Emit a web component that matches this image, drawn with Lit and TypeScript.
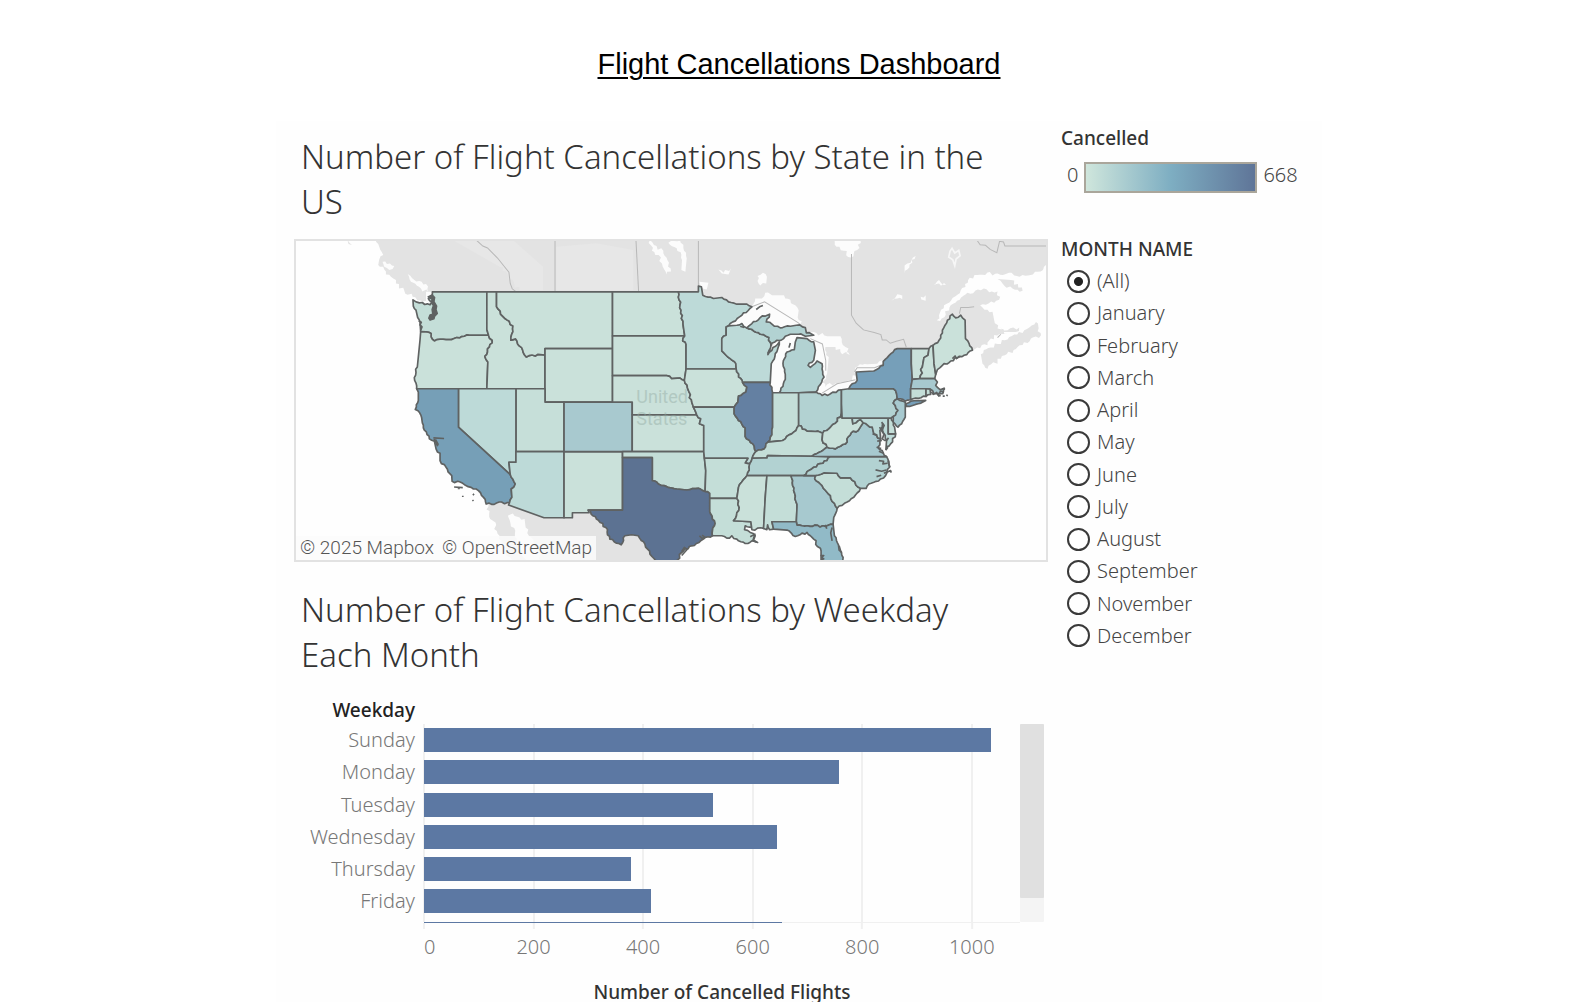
import { LitElement, html, svg, css } from "lit";
import { customElement, property, state } from "lit/decorators.js";

type Shape = { id: string; fill: string; pts: string };

const PALE = "#cae1da";
const LIGHT = "#c4ded8";
const SOFT = "#bddad8";
const TEAL = "#b2d2d2";
const MID = "#a7c9cf";

const STATES: Shape[] = [
  { id: "WA", fill: LIGHT, pts: "459,185 622,185 622,298 627,315 570,315 540,323 500,328 465,332 455,320 455,310 440,305 424,304 422,275 415,262 410,240 402,228 401,209 420,218 452,224 458,215 447,205 459,195" },
  { id: "OR", fill: PALE, pts: "424,304 440,305 455,310 455,320 465,332 500,328 540,323 570,315 627,315 638,330 630,350 616,378 625,395 622,475 412,475 405,442 414,410 418,370 422,330" },
  { id: "ID", fill: PALE, pts: "622,185 651,185 651,230 663,252 700,287 694,330 708,326 740,380 775,372 796,374 796,475 622,475 625,395 616,378 630,350 638,330 627,315 622,298" },
  { id: "MT", fill: PALE, pts: "651,185 998,185 998,355 796,355 796,374 775,372 740,380 708,326 694,330 700,287 663,252 651,230" },
  { id: "WY", fill: PALE, pts: "796,355 998,355 998,515 796,515" },
  { id: "UT", fill: "#c6dfd9", pts: "709,475 796,475 796,515 853,515 853,663 709,663" },
  { id: "NV", fill: SOFT, pts: "537,475 709,475 709,695 688,695 692,732 537,590" },
  { id: "CA", fill: "#769fb7", pts: "412,475 537,475 537,590 692,732 707,760 695,775 697,800 690,815 620,820 612,800 590,775 575,770 550,758 518,752 517,735 500,710 482,690 482,668 470,655 465,632 450,625 432,592 425,555 408,537 417,510 417,485" },
  { id: "AZ", fill: SOFT, pts: "709,663 853,663 853,861 793,861 687,823 690,815 697,800 695,775 707,760 692,732 688,695 709,695" },
  { id: "NM", fill: PALE, pts: "853,663 1028,663 1028,838 925,838 928,846 878,846 878,861 853,861" },
  { id: "CO", fill: "#a8c9cf", pts: "853,515 1057,515 1057,663 853,663" },
  { id: "ND", fill: PALE, pts: "998,185 1195,185 1203,240 1210,290 1214,317 998,317" },
  { id: "SD", fill: PALE, pts: "998,317 1214,317 1208,332 1218,342 1218,416 1213,450 1200,443 1175,445 1160,436 998,436" },
  { id: "NE", fill: PALE, pts: "998,436 1160,436 1175,445 1200,443 1213,450 1225,480 1235,515 1240,530 1250,553 1057,553 1057,515 998,515" },
  { id: "KS", fill: PALE, pts: "1057,553 1250,553 1262,565 1258,580 1271,585 1271,663 1057,663" },
  { id: "OK", fill: LIGHT, pts: "1028,663 1271,663 1273,683 1277,720 1275,782 1255,773 1220,778 1190,775 1160,768 1135,760 1117,750 1117,681 1028,681" },
  { id: "TX", fill: "#5c7292", pts: "1028,681 1117,681 1117,750 1135,760 1160,768 1190,775 1220,778 1255,773 1275,782 1289,788 1289,843 1303,870 1297,915 1270,925 1235,945 1205,965 1188,996 1134,996 1110,970 1095,940 1075,915 1055,912 1035,915 1024,942 990,925 978,890 950,865 925,838 1028,838" },
  { id: "MN", fill: SOFT, pts: "1195,185 1255,185 1255,168 1264,170 1268,195 1300,205 1325,202 1345,215 1370,222 1400,222 1415,230 1385,255 1345,287 1338,290 1338,315 1325,325 1325,362 1350,385 1367,400 1368,416 1218,416 1218,342 1208,332 1214,317 1210,290 1203,240" },
  { id: "WI", fill: SOFT, pts: "1345,287 1370,285 1385,280 1400,293 1440,312 1466,322 1472,345 1463,373 1478,352 1497,335 1485,370 1473,400 1470,456 1387,456 1375,440 1368,416 1367,400 1350,385 1325,362 1325,325 1338,315 1338,290" },
  { id: "MIU", fill: TEAL, pts: "1400,293 1415,280 1440,262 1468,252 1458,275 1475,282 1500,293 1530,288 1548,285 1575,292 1578,308 1600,315 1575,318 1555,312 1530,312 1510,325 1490,330 1472,345 1466,322 1440,312" },
  { id: "MIL", fill: TEAL, pts: "1550,322 1580,325 1600,335 1605,360 1600,390 1583,405 1590,411 1610,392 1625,400 1631,440 1620,462 1607,485 1555,487 1497,487 1508,468 1515,440 1508,400 1520,365 1542,358 1545,335" },
  { id: "IA", fill: PALE, pts: "1218,416 1368,416 1375,440 1387,456 1400,470 1397,485 1375,497 1373,515 1362,530 1240,530 1235,515 1225,480 1213,450" },
  { id: "MO", fill: SOFT, pts: "1240,530 1362,530 1362,550 1375,570 1395,592 1395,618 1418,640 1427,663 1416,683 1408,700 1395,697 1403,683 1273,683 1271,663 1271,585 1258,580 1262,565 1250,553" },
  { id: "IL", fill: "#6480a2", pts: "1387,456 1470,456 1477,487 1477,590 1470,620 1463,635 1452,655 1427,663 1418,640 1395,618 1395,592 1375,570 1362,550 1362,530 1373,515 1375,497 1397,485 1400,470" },
  { id: "IN", fill: LIGHT, pts: "1477,487 1555,487 1555,585 1540,605 1515,625 1490,632 1463,635 1470,620 1477,590" },
  { id: "OH", fill: TEAL, pts: "1555,487 1607,485 1625,495 1650,490 1683,478 1683,520 1682,552 1665,578 1645,595 1627,608 1605,603 1580,602 1555,585" },
  { id: "KY", fill: LIGHT, pts: "1463,635 1490,632 1515,625 1540,605 1555,585 1580,602 1605,603 1627,608 1625,628 1640,650 1595,677 1462,675 1460,682 1416,683 1427,663 1452,655" },
  { id: "TN", fill: TEAL, pts: "1416,683 1460,682 1462,675 1595,677 1650,678 1640,690 1600,710 1570,735 1532,735 1460,735 1400,735 1408,700" },
  { id: "AR", fill: LIGHT, pts: "1273,683 1403,683 1395,697 1408,700 1400,735 1375,770 1370,803 1289,803 1289,788 1275,782 1277,720" },
  { id: "LA", fill: LIGHT, pts: "1289,803 1370,803 1377,830 1360,870 1412,873 1415,890 1395,885 1393,897 1410,905 1425,915 1420,928 1432,935 1415,930 1395,938 1370,925 1355,915 1348,922 1325,915 1297,915 1303,870 1289,843" },
  { id: "MS", fill: PALE, pts: "1400,735 1460,735 1455,800 1450,893 1415,897 1412,873 1360,870 1377,830 1370,803 1375,770" },
  { id: "AL", fill: LIGHT, pts: "1460,735 1532,735 1540,780 1550,830 1548,873 1475,873 1480,895 1468,897 1462,882 1460,897 1450,893 1455,800" },
  { id: "GA", fill: MID, pts: "1532,735 1570,735 1605,735 1603,745 1620,760 1650,795 1670,833 1660,860 1658,880 1640,885 1635,887 1550,883 1548,873 1550,830 1540,780" },
  { id: "FL", fill: "#91bac7", pts: "1475,873 1548,873 1550,883 1635,887 1640,885 1658,880 1662,915 1675,950 1690,996 1622,996 1622,960 1600,925 1580,905 1545,917 1520,898 1480,895" },
  { id: "SC", fill: LIGHT, pts: "1605,735 1630,727 1670,728 1680,742 1710,742 1740,773 1720,800 1692,818 1670,833 1650,795 1620,760 1603,745" },
  { id: "NC", fill: TEAL, pts: "1650,678 1818,678 1827,710 1815,735 1800,745 1765,760 1757,773 1740,773 1710,742 1680,742 1670,728 1630,727 1605,735 1570,735 1600,710 1640,690" },
  { id: "VA", fill: MID, pts: "1748,577 1775,590 1780,610 1800,625 1792,650 1805,660 1818,678 1650,678 1595,677 1640,650 1665,655 1695,640 1712,607 1733,600" },
  { id: "WV", fill: PALE, pts: "1685,563 1715,563 1717,580 1740,567 1748,577 1733,600 1712,607 1695,640 1665,655 1640,650 1625,628 1627,608 1645,595 1665,578 1682,552" },
  { id: "MD", fill: SOFT, pts: "1715,563 1823,563 1823,610 1845,610 1830,640 1816,657 1818,630 1806,600 1806,580 1798,600 1800,625 1780,610 1775,590 1748,577 1740,567 1717,580" },
  { id: "DE", fill: LIGHT, pts: "1823,563 1832,562 1842,590 1845,610 1823,610" },
  { id: "PA", fill: TEAL, pts: "1683,478 1705,475 1838,475 1848,490 1850,505 1838,518 1852,540 1838,558 1832,562 1823,563 1685,563 1683,520" },
  { id: "NJ", fill: MID, pts: "1850,505 1874,515 1874,560 1852,590 1838,575 1838,558 1852,540 1838,518" },
  { id: "NY", fill: "#769fb9", pts: "1705,475 1730,450 1727,425 1780,422 1808,405 1808,393 1850,355 1892,355 1892,400 1895,447 1890,475 1890,508 1874,512 1850,505 1848,490 1838,475" },
  { id: "LI", fill: "#769fb9", pts: "1876,520 1900,511 1935,510 1905,522 1878,528" },
  { id: "VT", fill: PALE, pts: "1892,355 1945,355 1942,375 1930,382 1925,410 1918,445 1895,447 1892,400" },
  { id: "NH", fill: PALE, pts: "1945,355 1957,345 1960,400 1965,432 1962,445 1918,445 1925,410 1930,382 1942,375" },
  { id: "ME", fill: PALE, pts: "1957,345 1975,330 1985,300 2000,270 2015,252 2025,263 2040,255 2053,270 2054,325 2065,340 2075,360 2050,375 2030,382 2010,392 1985,405 1970,418 1965,432 1960,400" },
  { id: "MA", fill: MID, pts: "1895,447 1918,445 1962,445 1970,455 1965,465 1978,478 1990,474 1986,490 1960,490 1948,476 1936,475 1890,475" },
  { id: "CT", fill: LIGHT, pts: "1890,475 1936,475 1936,498 1890,508" },
  { id: "RI", fill: LIGHT, pts: "1936,475 1948,476 1950,492 1936,498" },
];

// Splits oblique segments into small steps so borders look like rivers and coasts.
// The offset depends only on the segment itself, so neighbours share one line.
function roughen(pts: string, amp = 4): string {
  const p = pts.split(" ").map((s) => s.split(",").map(Number));
  let d = "";
  for (let i = 0; i < p.length; i++) {
    const a = p[i];
    const b = p[(i + 1) % p.length];
    d += `${i ? "L" : "M"}${a[0]} ${a[1]}`;
    const dx = b[0] - a[0];
    const dy = b[1] - a[1];
    const len = Math.hypot(dx, dy);
    if (Math.abs(dx) < 6 || Math.abs(dy) < 4 || len > 100 || len < 14) continue;
    const n = Math.max(2, Math.round(len / 8));
    const flip = dx < 0 ? -1 : 1;
    for (let k = 1; k < n; k++) {
      const x = a[0] + (dx * k) / n;
      const y = a[1] + (dy * k) / n;
      const h = Math.sin(Math.round(x) * 12.9898 + Math.round(y) * 78.233) * 43758.5453;
      const off = (h - Math.floor(h) - 0.5) * amp * 1.6 * flip;
      const ox = (-dy / len) * off;
      const oy = (dx / len) * off;
      d += `L${(x + ox).toFixed(0)} ${(y + oy).toFixed(0)}`;
    }
  }
  return d + "Z";
}

const LAND = [
  "288,20 300,50 312,75 300,88 297,105 315,118 335,140 350,160 375,182 400,200 440,212 445,190 440,212 480,240 440,320 430,460 440,560 500,660 560,740 610,790 620,820 640,870 660,915 678,950 695,996 1134,996 1200,930 1300,890 1550,880 1640,860 1660,820 1760,740 1800,640 1840,560 1880,490 1940,470 1980,400 2075,360 2120,345 2130,325 2155,312 2180,310 2150,295 2140,270 2135,245 2105,232 2098,225 2140,218 2158,200 2150,184 2100,180 2060,188 2010,225 1978,272 1968,270 1990,225 2040,180 2062,150 2090,135 2150,130 2225,135 2270,125 2310,100 2310,20",
  "2100,372 2130,352 2180,328 2230,300 2265,275 2272,288 2280,315 2250,325 2210,350 2160,385 2120,415 2105,400",
  "2150,147 2190,150 2225,182 2195,175 2165,160",
  "2155,290 2180,300 2215,292 2205,305 2165,305",
  "205,30 218,45 208,42",
];

const TINTS = [
  "520,30 700,30 790,110 790,180 720,180 660,110",
  "830,50 950,40 1060,60 1060,180 830,180",
];

const WATER = [
  "310,95 345,108 340,117 315,110",
  "385,132 405,150 440,162 446,185 425,175 395,155",
  "440,185 459,185 456,218 440,212",
  "1110,30 1122,45 1150,62 1162,90 1172,115 1160,133 1146,100 1136,75 1116,62",
  "1165,38 1200,30 1212,62 1220,85 1216,125 1204,120 1206,90 1190,55",
  "1258,155 1285,158 1280,178 1262,170",
  "1315,118 1330,128 1352,115 1345,133 1325,130",
  "1432,138 1448,128 1460,140 1458,160 1440,166",
  "1345,287 1385,255 1415,230 1425,205 1445,205 1455,188 1475,195 1500,195 1515,205 1545,225 1555,240 1552,262 1566,290 1570,310 1500,320 1460,300 1400,310",
  "1470,350 1500,320 1560,310 1560,360 1520,380 1516,470 1485,496 1466,470",
  "1555,308 1600,305 1640,318 1680,318 1695,350 1708,374 1680,365 1665,350 1635,350 1645,380 1640,430 1625,455 1635,470 1600,490 1590,420 1560,400",
  "1600,480 1640,462 1680,455 1735,435 1732,460 1705,478 1683,482 1650,495 1625,500",
  "1722,428 1732,408 1760,402 1790,400 1812,385 1814,405 1780,428 1730,432",
  "1655,30 1740,30 1730,60 1712,82 1690,62 1668,50",
  "1870,130 1880,100 1905,78 1895,98 1880,118",
  "1832,212 1850,192 1872,210 1850,205",
  "1960,165 1975,150 1996,165 1975,160",
  "1920,200 1935,195 1935,212 1922,208",
  "685,855 700,848 735,865 738,890 755,920 790,996 742,996 712,925",
  "1806,575 1812,600 1818,640 1812,680 1806,660 1810,625 1800,600",
];

const PROVINCES = [
  "M590 30l20 18 14 6 16 16 14 14 16 20 18 22 4 34 6 16 10 8",
  "M826 27V183",
  "M1068 27l8 156",
  "M1255 27v143",
  "M1713 72v183l14 24 22 20 32 8 20 6 4 16 12 0 12 10 18-6 22-6 8 24",
  "M1415 230l38-15 100 62 20 16",
  "M1590 325l36 16 10 50v30",
  "M1625 488l45-28 55-12M1722 424l8-12h52l26-10",
  "M2036 250l4-18 22 0 18-2",
  "M2088 30l10 14 16 2 14 12 20 10 8-34 12 2 4 12h128",
  "M2150 322l10-10",
];

const LAKE_RING = "M2014 55l8 14 12-8 4 16-12 10-4 20-6-18-12-8 4-18z";

@customElement("cancellation-map")
export class CancellationMap extends LitElement {
  static styles = css`
    :host {
      display: block;
    }
    .frame {
      position: relative;
      border: 2px solid #e2e2e2;
      background: #fefefe;
      overflow: hidden;
    }
    .map {
      display: block;
      width: 100%;
      height: auto;
    }
    .land {
      fill: #e3e3e3;
    }
    .tint {
      fill: #e7e7e7;
    }
    .water {
      fill: #fcfcfc;
    }
    .ring {
      fill: none;
      stroke: #f6f6f6;
      stroke-width: 5;
    }
    .province {
      fill: none;
      stroke: #b8b8b8;
      stroke-width: 3;
    }
    .region {
      stroke: #5f6262;
      stroke-width: 5;
      stroke-linejoin: round;
    }
    .detail {
      fill: none;
      stroke: #5f6262;
      stroke-width: 5;
      stroke-linejoin: round;
    }
    .sound {
      fill: #5f6262;
      stroke: #5f6262;
      stroke-width: 4;
      stroke-linejoin: round;
    }
    .country {
      font: 54px Roboto, sans-serif;
      fill: #8fa8a0;
      opacity: 0.42;
    }
    .credit {
      position: absolute;
      left: 0;
      bottom: 0;
      display: flex;
      gap: 8px;
      padding: 0 4px;
      background: rgba(252, 252, 252, 0.85);
      font: 300 19px/24px Roboto, "Liberation Sans", sans-serif;
    }
    .credit-link {
      color: #555;
      text-decoration: none;
    }
  `;

  render() {
    return html`
      <div class="frame">
        <svg class="map" viewBox="51 33 2244 954" role="img" aria-label="Map of cancellations by state">
          ${LAND.map((p) => svg`<path class="land" d=${roughen(p, 8)}></path>`)}
          ${TINTS.map((p) => svg`<path class="tint" d=${roughen(p, 8)}></path>`)}
          ${WATER.map((p) => svg`<path class="water" d=${roughen(p, 8)}></path>`)}
          <path class="ring" d=${LAKE_RING} />
          ${PROVINCES.map((d) => svg`<path class="province" d=${d}></path>`)}
          ${STATES.map((s) => svg`<path class="region" fill=${s.fill} d=${roughen(s.pts)}></path>`)}
          <path class="sound" d="M446 200l12-6 8 8-2 12 8 14-2 10 4 12-8 8-2 8-12 4-4-6 4-10 8-2-2-14 4-12-6-8 2-10z" />
          <path class="detail" d="M418 272l8 4-4 8 6 6-4 10M462 622l32 2M464 625l10 20 2-4-8-14M524 769l26 2M535 773l6 0M550 795v4M580 790l4 3M579 808l3 3" />
          <path class="detail" d="M1803 575l8 10-8 16 8 10-6 14 10 6M1797 590l6 10M1776 610l14 4M1790 632l14-2M1788 650l14 4M1795 662l14 6M1816 632l8-10M1822 650l-6 8M1795 690l14 2-2 8 14-2M1785 718l18 4 14-4M1788 738l14-4M1810 728l20-8 2 6M1822 690l6 20" />
          <path class="detail" d="M1952 484l6 8 10-6 4 8 8-12 10 4M1972 497l8-2M1986 497h6M1998 497l2-4M1985 476l6 0-1-4" />
          <path class="detail" d="M1655 890l-4 16 4 24M1635 882l4 12M1676 945l6 20M1620 974l10 0-6 6 6 4-8 2M1258 915l8 8 8-4-8-6M1205 962l8-12 8 6-16 18" />
          <path class="detail" d="M1428 238l10-8 10-4M1463 370l6-14M1526 352l4-14M1410 918l14-8-6 20 12 4M2015 385l8-8 4 8 10-6M1380 288l12 4" />
          <text class="country" x="1069" y="518">United</text>
          <text class="country" x="1069" y="583">States</text>
        </svg>
        <div class="credit">
          <a class="credit-link" href="#mapbox">© 2025 Mapbox</a>
          <a class="credit-link" href="#osm">© OpenStreetMap</a>
        </div>
      </div>
    `;
  }
}

const DAYS: [string, number][] = [
  ["Sunday", 1035],
  ["Monday", 757],
  ["Tuesday", 527],
  ["Wednesday", 645],
  ["Thursday", 377],
  ["Friday", 415],
  ["", 654],
];
const TICKS = [0, 200, 400, 600, 800, 1000];
const AXIS_MAX = 1088;
const pct = (v: number) => `${((v / AXIS_MAX) * 100).toFixed(2)}%`;

@customElement("weekday-chart")
export class WeekdayChart extends LitElement {
  static styles = css`
    :host {
      display: block;
      color: #777;
      font-size: 20px;
      font-weight: 300;
    }
    .chart {
      display: grid;
      grid-template-columns: 121px 1fr 24px;
      padding-right: 4px;
    }
    .heading {
      font-size: 19px;
      font-weight: 500;
      color: #222;
      text-align: right;
      line-height: 28px;
    }
    .plot {
      grid-column: 1 / 3;
      grid-row: 2;
      position: relative;
      height: 199px;
      overflow: hidden;
    }
    .rows {
      display: grid;
      grid-auto-rows: 1fr;
      height: 226px;
      margin: 0;
      padding: 0;
      list-style: none;
    }
    .row {
      display: grid;
      grid-template-columns: 121px 1fr;
      column-gap: 9px;
      align-items: center;
    }
    .day {
      text-align: right;
      line-height: 32px;
    }
    .bar {
      position: relative;
      height: 24px;
      background: #5c78a3;
    }
    .grid {
      position: absolute;
      inset: 0 0 0 130px;
      border-bottom: 1px solid #f0f0f0;
    }
    .line {
      position: absolute;
      top: 0;
      bottom: 0;
      width: 2px;
      margin-left: -1px;
      background: #f0f0f0;
    }
    .scroll {
      grid-column: 3;
      grid-row: 2;
      height: 198px;
      background: #f4f4f4;
      border-radius: 1px;
    }
    .thumb {
      height: 174px;
      background: #e0e0e0;
      border-radius: 1px;
    }
    .axis {
      grid-column: 1 / 3;
      margin-left: 130px;
      position: relative;
      height: 58px;
    }
    .tick {
      position: absolute;
      top: 0;
      padding-top: 10px;
      line-height: 28px;
      transform: translateX(-50%);
    }
    .tick::before {
      content: "";
      position: absolute;
      top: 0;
      left: 50%;
      width: 2px;
      height: 6px;
      margin-left: -1px;
      background: #f0f0f0;
    }
    .tick:first-child {
      transform: none;
    }
    .tick:first-child::before {
      left: 0;
    }
    .caption {
      grid-column: 1 / 3;
      margin-left: 130px;
      text-align: center;
      font-size: 19px;
      font-weight: 500;
      color: #333;
      line-height: 22px;
    }
  `;

  render() {
    return html`
      <div class="chart">
        <div class="heading">Weekday</div>
        <div class="plot">
          <div class="grid">
            ${TICKS.map((t) => html`<span class="line" style="left:${pct(t)}"></span>`)}
          </div>
          <ul class="rows">
            ${DAYS.map(
              ([day, n]) => html`<li class="row">
                <span class="day">${day}</span>
                <span class="bar" style="width:${pct(n)}"></span>
              </li>`
            )}
          </ul>
        </div>
        <div class="scroll"><div class="thumb"></div></div>
        <div class="axis">
          ${TICKS.map((t) => html`<span class="tick" style="left:${pct(t)}">${t}</span>`)}
        </div>
        <div class="caption">Number of Cancelled Flights</div>
      </div>
    `;
  }
}

const MONTHS = [
  "(All)", "January", "February", "March", "April", "May", "June",
  "July", "August", "September", "November", "December",
];

@customElement("month-filter")
export class MonthFilter extends LitElement {
  @state() private selected = "(All)";

  static styles = css`
    :host {
      display: block;
    }
    .filter {
      margin: 0;
      padding: 0;
      border: 0;
    }
    .legend {
      padding: 0;
      font-size: 19px;
      font-weight: 500;
      line-height: 28px;
      color: #333;
    }
    .list {
      display: grid;
      grid-auto-rows: 1fr;
      height: 387px;
      padding: 2px 0 0 6px;
    }
    .option {
      display: flex;
      align-items: center;
      gap: 7px;
      font-size: 20px;
      font-weight: 300;
      line-height: 28px;
      color: #444;
    }
    .radio {
      appearance: none;
      box-sizing: border-box;
      width: 23px;
      height: 23px;
      margin: 0;
      border: 2px solid #3a3a3a;
      border-radius: 50%;
      background: #fff;
    }
    .radio:checked {
      background: radial-gradient(circle, #222 0 4px, #fff 5px);
    }
  `;

  render() {
    return html`
      <fieldset class="filter">
        <legend class="legend">MONTH NAME</legend>
        <div class="list">
          ${MONTHS.map(
            (m) => html`<label class="option">
              <input
                class="radio"
                type="radio"
                name="month"
                .checked=${m === this.selected}
                @change=${() => (this.selected = m)}
              />${m}
            </label>`
          )}
        </div>
      </fieldset>
    `;
  }
}

@customElement("app-root")
export class AppRoot extends LitElement {
  @property({ type: Number }) max = 668;

  static styles = css`
    :host {
      display: block;
      box-sizing: border-box;
      height: 100vh;
      overflow: hidden;
      background: #fff;
      font-family: "Noto Sans", "Open Sans", sans-serif;
    }
    .page {
      max-width: 1046px;
      margin: 0 auto;
      padding-left: 6px;
    }
    .title {
      margin: 0;
      padding: 47px 0 40px;
      text-align: center;
      font: 400 29px/34px "Liberation Sans", Arial, sans-serif;
      color: #000;
      text-decoration: underline;
      text-decoration-thickness: 2px;
      text-underline-offset: 3px;
    }
    .dashboard {
      display: grid;
      grid-template-columns: minmax(0, 754px) minmax(240px, 1fr);
      column-gap: 13px;
      padding-left: 18px;
      background: #fefefe;
    }
    .sheet-title {
      margin: 0;
      padding: 13px 40px 15px 7px;
      font-size: 33px;
      font-weight: 300;
      line-height: 45px;
      color: #333;
    }
    .sheet-title.second {
      padding: 25px 40px 19px 7px;
    }
    .side {
      padding-top: 3px;
    }
    .ramp-title {
      margin: 0;
      font-size: 19px;
      font-weight: 500;
      line-height: 28px;
      color: #333;
    }
    .ramp {
      display: flex;
      align-items: flex-start;
      gap: 6px;
      margin: 10px 0 42px;
      padding-left: 6px;
      font-size: 20px;
      font-weight: 300;
      line-height: 26px;
      color: #444;
    }
    .ramp-bar {
      box-sizing: border-box;
      width: 173px;
      height: 31px;
      border: 2px solid #aaa69b;
      background: linear-gradient(90deg, #cfe6dc, #7eaec2 50%, #5f7598);
    }
  `;

  render() {
    return html`
      <main class="page">
        <h1 class="title">Flight Cancellations Dashboard</h1>
        <div class="dashboard">
          <div class="charts">
            <h2 class="sheet-title">Number of Flight Cancellations by State in the US</h2>
            <cancellation-map></cancellation-map>
            <h2 class="sheet-title second">Number of Flight Cancellations by Weekday Each Month</h2>
            <weekday-chart></weekday-chart>
          </div>
          <aside class="side">
            <h3 class="ramp-title">Cancelled</h3>
            <div class="ramp"><span>0</span><span class="ramp-bar"></span><span>${this.max}</span></div>
            <month-filter></month-filter>
          </aside>
        </div>
      </main>
    `;
  }
}
